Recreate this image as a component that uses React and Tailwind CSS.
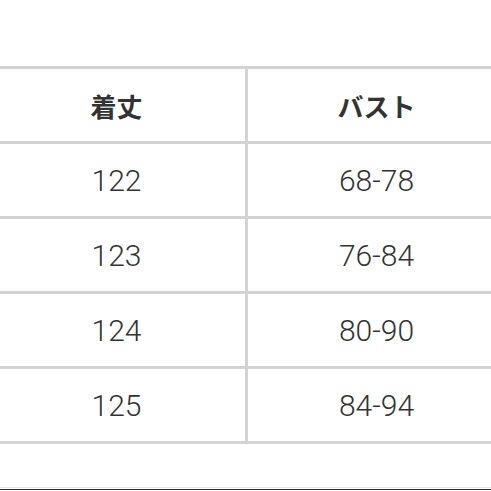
import React from "react";

const rows = [
  ["122", "68-78"],
  ["123", "76-84"],
  ["124", "80-90"],
  ["125", "84-94"],
];

const cell =
  "h-[75px] w-[260px] border-[3px] border-[#d3d3d3] text-center align-middle p-0";

export default function App() {
  return (
    <div
      className="w-[491px] h-[491px] overflow-hidden bg-white text-[#333]"
      style={{ fontFamily: '"Noto Sans CJK JP", "Noto Sans", sans-serif' }}
    >
      <div className="pt-[66px] ml-[-15px]">
        <table className="border-collapse w-[520px] table-fixed">
          <thead>
            <tr>
              <th className={cell + " text-[26px] font-bold"}>着丈</th>
              <th className={cell + " text-[26px] font-bold"}>バスト</th>
            </tr>
          </thead>
          <tbody>
            {rows.map(([a, b]) => (
              <tr key={a}>
                <td className={cell + " text-[30px] font-light font-[Roboto,sans-serif]"}>{a}</td>
                <td className={cell + " text-[30px] font-light font-[Roboto,sans-serif]"}>{b}</td>
              </tr>
            ))}
          </tbody>
        </table>
      </div>
      <div className="mt-[43px] h-px bg-[#e5e5e5]" />
      <div className="mt-px h-px bg-[#333]" />
    </div>
  );
}
